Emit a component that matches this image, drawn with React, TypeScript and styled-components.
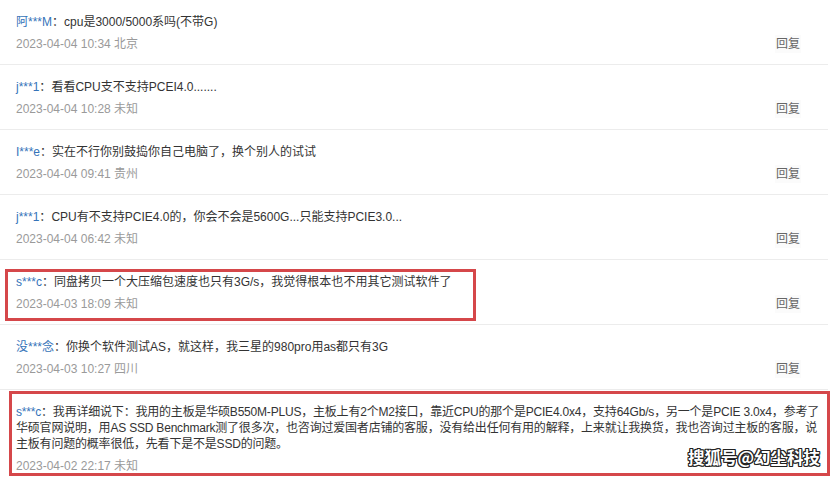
import React from "react";
import styled, { createGlobalStyle } from "styled-components";

const Global = createGlobalStyle`
  html, body { margin: 0; padding: 0; background: #fff; }
  body { font-family: "Liberation Sans", "Noto Sans CJK SC", sans-serif; }
`;

const Page = styled.div`
  position: relative;
  width: 836px;
  height: 477px;
  overflow: hidden;
  background: #fff;
`;

const List = styled.ul`
  list-style: none;
  margin: 0;
  padding: 0;
  width: 828px;
`;

const Row = styled.li`
  position: relative;
  display: flex;
  flex-direction: column;
  padding: 14px 27px 11px 16px;
  border-bottom: 1px solid #ececec;
  font-size: 12px;
`;

const Content = styled.p<{ $tight?: boolean }>`
  margin: 0;
  line-height: 16px;
  color: #333;
  white-space: nowrap;
  letter-spacing: ${(p) => (p.$tight ? "-0.2px" : "0")};
`;

const Name = styled.a`
  color: #3573b9;
  text-decoration: none;
`;

const Meta = styled.div`
  display: flex;
  justify-content: space-between;
  align-items: center;
  margin-top: 5px;
  line-height: 18px;
`;

const DateText = styled.span`
  color: #9a9a9a;
`;

const Reply = styled.span<{ $hidden?: boolean }>`
  color: #666;
  background: #fbfbfb;
  padding: 0 1px;
  visibility: ${(p) => (p.$hidden ? "hidden" : "visible")};
`;

const Mark = styled.div<{ $l: number; $t: number; $w: number; $h: number }>`
  position: absolute;
  left: ${(p) => p.$l}px;
  top: ${(p) => p.$t}px;
  width: ${(p) => p.$w}px;
  height: ${(p) => p.$h}px;
  border: 3px solid #d5474a;
  box-sizing: border-box;
  pointer-events: none;
`;

const Watermark = styled.div`
  position: absolute;
  right: 16px;
  bottom: 8px;
  font-family: "Noto Sans CJK SC", sans-serif;
  font-weight: 700;
  font-size: 16.5px;
  color: #fff;
  text-shadow: -1px -1px 0 #222, 1px -1px 0 #222, -1px 1px 0 #222, 1px 1px 0 #222,
    0 1px 0 #222, 0 -1px 0 #222, 1px 0 0 #222, -1px 0 0 #222;
`;

type Item = {
  name: string;
  lines: string[];
  date: string;
  mark?: { l: number; t: number; w: number; h: number };
  covered?: boolean;
};

const items: Item[] = [
  { name: "阿***M", lines: ["cpu是3000/5000系吗(不带G)"], date: "2023-04-04 10:34 北京" },
  { name: "j***1", lines: ["看看CPU支不支持PCEI4.0......."], date: "2023-04-04 10:28 未知" },
  { name: "I***e", lines: ["实在不行你别鼓捣你自己电脑了，换个别人的试试"], date: "2023-04-04 09:41 贵州" },
  { name: "j***1", lines: ["CPU有不支持PCIE4.0的，你会不会是5600G...只能支持PCIE3.0..."], date: "2023-04-04 06:42 未知" },
  {
    name: "s***c",
    lines: ["同盘拷贝一个大压缩包速度也只有3G/s，我觉得根本也不用其它测试软件了"],
    date: "2023-04-03 18:09 未知",
    mark: { l: 5, t: 9, w: 471, h: 52 },
  },
  { name: "没***念", lines: ["你换个软件测试AS，就这样，我三星的980pro用as都只有3G"], date: "2023-04-03 10:27 四川" },
  {
    name: "s***c",
    lines: [
      "我再详细说下：我用的主板是华硕B550M-PLUS，主板上有2个M2接口，靠近CPU的那个是PCIE4.0x4，支持64Gb/s，另一个是PCIE 3.0x4，参考了",
      "华硕官网说明，用AS SSD Benchmark测了很多次，也咨询过爱国者店铺的客服，没有给出任何有用的解释，上来就让我换货，我也咨询过主板的客服，说",
      "主板有问题的概率很低，先看下是不是SSD的问题。",
    ],
    date: "2023-04-02 22:17 未知",
    mark: { l: 9, t: 1, w: 821, h: 85 },
    covered: true,
  },
];

export default function App() {
  return (
    <>
      <Global />
      <Page>
        <List>
          {items.map((it, i) => (
            <Row key={i}>
              <Content $tight={it.lines.length > 1}>
                {it.lines.map((ln, j) => (
                  <React.Fragment key={j}>
                    {j === 0 && <Name href="#">{it.name}</Name>}
                    {j === 0 ? "：" : null}
                    {ln}
                    {j < it.lines.length - 1 && <br />}
                  </React.Fragment>
                ))}
              </Content>
              <Meta>
                <DateText>{it.date}</DateText>
                <Reply $hidden={it.covered}>回复</Reply>
              </Meta>
              {it.mark && <Mark $l={it.mark.l} $t={it.mark.t} $w={it.mark.w} $h={it.mark.h} />}
            </Row>
          ))}
        </List>
        <Watermark>搜狐号@幻尘科技</Watermark>
      </Page>
    </>
  );
}
